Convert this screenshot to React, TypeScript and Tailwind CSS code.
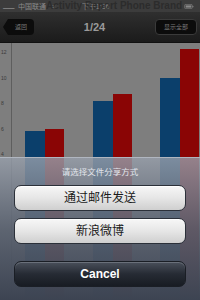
import { BsBatteryFull } from "react-icons/bs";

const font = { fontFamily: '"Liberation Sans", "Noto Sans CJK SC", sans-serif' };

const groups = [
  { blue: 5.9, red: 6.05 },
  { blue: 8.2, red: 8.75 },
  { blue: 10.05, red: 12.3 },
];

// y value -> px from top of plot (12 at 10px, 2 units = 25.5px)
function yPos(v: number) {
  return 10 + (12 - v) * 12.75;
}

function Chart() {
  return (
    <div className="relative h-[257px] bg-[#7e7e7e]">
      <div className="absolute left-[11px] top-0 bottom-0 w-px bg-[#5e5e5e]" />
      {[12, 10, 8, 6, 4].map((v) => (
        <span
          key={v}
          className="absolute left-[1px] text-[5px] leading-none text-[#3a3a3a]"
          style={{ top: yPos(v) - 3 }}
        >
          {v}
        </span>
      ))}
      {groups.map((g, i) => (
        <div key={i} className="absolute bottom-0 flex items-end" style={{ left: 25 + i * 67.5 }}>
          <div className="w-[20px] bg-[#0b3f6b]" style={{ height: 257 - yPos(g.blue) }} />
          <div className="w-[19px] bg-[#8a0505]" style={{ height: 257 - yPos(g.red) }} />
        </div>
      ))}
    </div>
  );
}

function SheetButton({ label }: { label: string }) {
  return (
    <button className="h-[26px] w-full rounded-[7px] border border-[#2b3039] bg-gradient-to-b from-[#f7f7f7] via-[#e6e6e6] to-[#cfcfcf] text-[12px] text-[#1a1a1a] shadow-[inset_0_1px_0_#ffffff]">
      {label}
    </button>
  );
}

export default function App() {
  return (
    <div className="relative h-[300px] w-[200px] overflow-hidden bg-[#7e7e7e]" style={font}>
      <div className="relative flex h-[12px] items-center bg-[#3c3c3c] px-[3px] text-[7px] leading-none text-[#8a8a8a]">
        <span className="text-[6px] tracking-[-0.5px]">▁▁</span>
        <span className="ml-[4px]">中国联通</span>
        <span className="ml-[6px]">≈</span>
        <span className="ml-[26px]">下午1:36</span>
        <BsBatteryFull className="ml-auto mr-[2px] h-[9px] w-[12px] text-[#8a8a8a]" />
        <span className="absolute left-[46px] top-[1px] whitespace-nowrap text-[10px] font-bold text-[#222222] opacity-60">
          Activity Report Phone Brand
        </span>
      </div>
      <div className="flex h-[31px] items-center justify-between border-b border-[#111111] bg-gradient-to-b from-[#2f2f2f] to-[#1b1b1b] px-[3px]">
        <div className="flex h-[16px] items-center">
          <div className="h-0 w-0 border-y-[8px] border-r-[5px] border-y-transparent border-r-[#0c0c0c]" />
          <div className="flex h-[16px] w-[26px] items-center justify-center rounded-r-[4px] bg-[#0c0c0c] text-[6px] text-[#777777]">
            返回
          </div>
        </div>
        <span className="text-[11px] font-bold text-[#9a9a9a]">1/24</span>
        <div className="flex h-[16px] w-[42px] items-center justify-center rounded-[4px] border border-[#3a3a3a] bg-[#0c0c0c] text-[6px] text-[#777777]">
          显示全部
        </div>
      </div>
      <Chart />
      <div className="absolute bottom-0 left-0 right-0 flex h-[143px] flex-col items-center border-t border-[#b0b6c0] bg-gradient-to-b from-[#98a0ac]/80 via-[#5a6270]/90 to-[#3d4452] px-[14px]">
        <span className="mt-[8px] text-[8.5px] text-[#e2e6ec]">请选择文件分享方式</span>
        <div className="mt-[6px] flex w-full flex-col gap-[7px]">
          <SheetButton label="通过邮件发送" />
          <SheetButton label="新浪微博" />
        </div>
        <button className="mt-[17px] h-[26px] w-full rounded-[7px] border border-[#1a1e25] bg-gradient-to-b from-[#4a505b] via-[#262b34] to-[#181c23] text-[12px] font-bold text-white shadow-[inset_0_1px_0_#6a707a]">
          Cancel
        </button>
      </div>
    </div>
  );
}
